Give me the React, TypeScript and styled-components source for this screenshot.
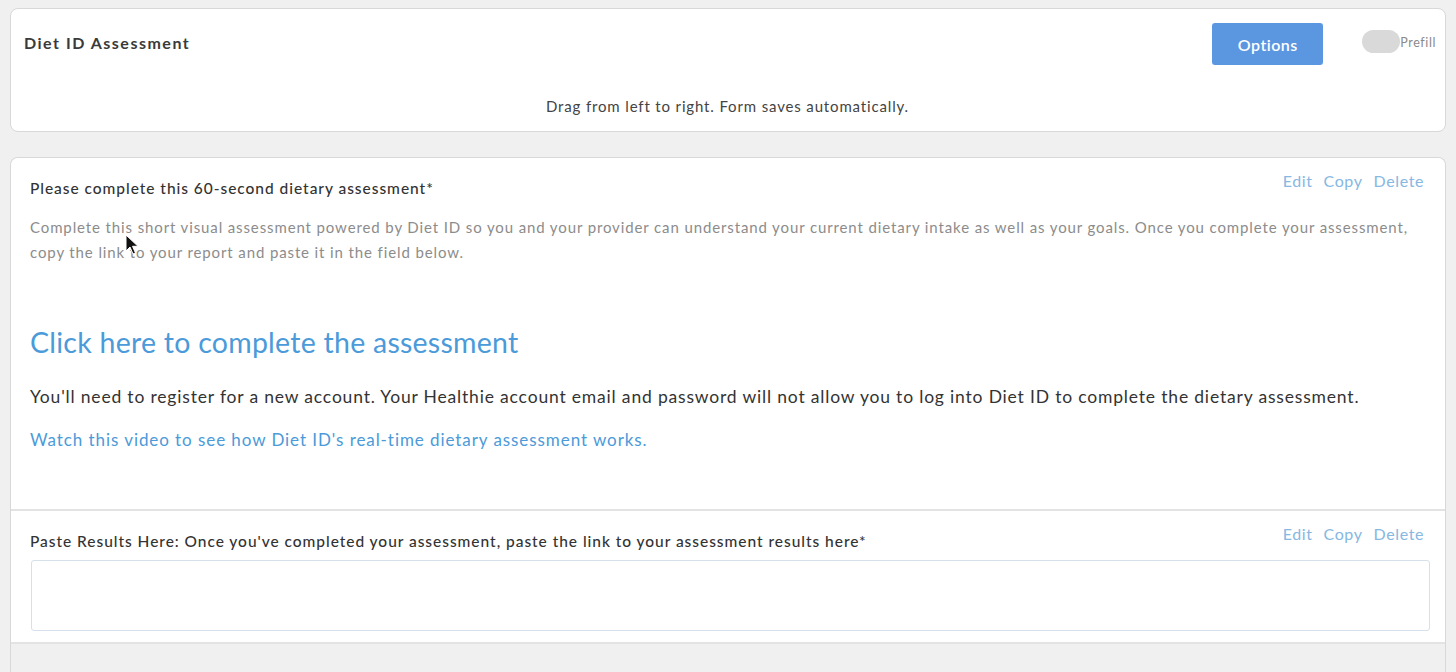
import React from "react";
import styled, { createGlobalStyle } from "styled-components";

const Global = createGlobalStyle`
  html, body { margin: 0; padding: 0; background: #f0f0f0; }
  body { font-family: "Lato", "Open Sans", sans-serif; color: #333; overflow: hidden; }
  * { box-sizing: border-box; }
`;

const Page = styled.div`
  position: relative;
  height: 672px;
  padding: 8px 10px 0 10px;
  display: flex;
  flex-direction: column;
  gap: 25px;
  background: #f0f0f0;
  overflow: hidden;
`;

const HeaderCard = styled.section`
  background: #fff;
  border: 1px solid #d8d8d8;
  border-radius: 8px;
  height: 124px;
  padding: 14px 14px 0 13px;
  display: flex;
  flex-direction: column;
`;

const HeaderTop = styled.div`
  display: flex;
  align-items: center;
  justify-content: space-between;
  height: 42px;
`;

const Title = styled.h1`
  margin: -3px 0 0 0;
  font-size: 16px;
  font-weight: 700;
  color: #3a3a3a;
  letter-spacing: 1.5px;
`;

const HeaderTools = styled.div`
  display: flex;
  align-items: center;
  gap: 39px;
`;

const OptionsButton = styled.button`
  width: 111px;
  height: 42px;
  border: none;
  border-radius: 3px;
  background: #5b97e1;
  color: #fff;
  font-family: "Lato", sans-serif;
  font-size: 16px;
  font-weight: 600;
  letter-spacing: 0.5px;
`;

const PrefillWrap = styled.label`
  display: flex;
  align-items: center;
  margin-top: -6px;
  margin-right: -5px;
`;

const Track = styled.span`
  display: block;
  width: 38px;
  height: 23px;
  border-radius: 11.5px;
  background: #d9d9d9;
`;

const PrefillText = styled.span`
  font-size: 12.5px;
  color: #8a8a8a;
  letter-spacing: 0.6px;
  margin-top: 3px;
`;

const Hint = styled.p`
  margin: 32px 0 0 0;
  text-align: center;
  font-size: 15px;
  color: #444;
  letter-spacing: 0.85px;
`;

const FormCard = styled.section`
  flex: 1;
  background: #f0f0f0;
  border: 1px solid #d8d8d8;
  border-bottom: none;
  border-radius: 8px 8px 0 0;
  overflow: hidden;
  display: flex;
  flex-direction: column;
`;

const FieldBlock = styled.div<{ $h: number }>`
  background: #fff;
  height: ${(p) => p.$h}px;
  border-bottom: 2px solid #e3e3e3;
  padding: 0 15px 0 19px;
  display: flex;
  flex-direction: column;
`;

const FieldHead = styled.div`
  display: flex;
  justify-content: space-between;
  align-items: flex-start;
  padding-top: 15px;
`;

const Label = styled.div`
  font-size: 15.5px;
  color: #333;
  font-weight: 500;
  letter-spacing: 0.96px;
  margin-top: 5.5px;
`;

const Actions = styled.div`
  display: flex;
  gap: 11px;
  margin-top: -2px;
  margin-right: 6px;
`;

const ActionLink = styled.a`
  font-size: 16px;
  color: #86b8e2;
  letter-spacing: 0.6px;
  cursor: pointer;
`;

const Description = styled.p`
  margin: 18px 0 0 0;
  font-size: 15px;
  line-height: 25px;
  color: #8c8c8c;
  letter-spacing: 0.88px;
  white-space: nowrap;
`;

const BigLink = styled.a`
  display: block;
  margin-top: 60px;
  font-size: 28.5px;
  color: #4b9ad9;
  letter-spacing: 0.25px;
  line-height: 34px;
`;

const Body = styled.p`
  margin: 26px 0 0 0;
  font-size: 17.5px;
  color: #333;
  letter-spacing: 0.82px;
  line-height: 24px;
  white-space: nowrap;
`;

const VideoLink = styled.a`
  display: block;
  margin-top: 19px;
  font-size: 17px;
  color: #4b9ad9;
  letter-spacing: 0.93px;
  line-height: 24px;
`;

const InputBox = styled.textarea`
  margin-top: 10px;
  margin-left: 1px;
  height: 71px;
  border: 1px solid #d5e0ea;
  border-radius: 3px;
  resize: none;
  background: #fff;
  outline: none;
`;

const Cursor = styled.svg`
  position: absolute;
  left: 125px;
  top: 234px;
`;

function FieldActions() {
  return (
    <Actions>
      <ActionLink>Edit</ActionLink>
      <ActionLink>Copy</ActionLink>
      <ActionLink>Delete</ActionLink>
    </Actions>
  );
}

export default function App() {
  return (
    <>
      <Global />
      <Page>
        <HeaderCard>
          <HeaderTop>
            <Title>Diet ID Assessment</Title>
            <HeaderTools>
              <OptionsButton>Options</OptionsButton>
              <PrefillWrap>
                <Track />
                <PrefillText>Prefill</PrefillText>
              </PrefillWrap>
            </HeaderTools>
          </HeaderTop>
          <Hint>Drag from left to right. Form saves automatically.</Hint>
        </HeaderCard>

        <FormCard>
          <FieldBlock $h={353}>
            <FieldHead>
              <Label>Please complete this 60-second dietary assessment*</Label>
              <FieldActions />
            </FieldHead>
            <Description>
              Complete this short visual assessment powered by Diet ID so you and your provider can understand your current dietary intake as well as your goals. Once you complete your assessment,
              <br />
              copy the link to your report and paste it in the field below.
            </Description>
            <BigLink>Click here to complete the assessment</BigLink>
            <Body>
              You'll need to register for a new account. Your Healthie account email and password will not allow you to log into Diet ID to complete the dietary assessment.
            </Body>
            <VideoLink>Watch this video to see how Diet ID's real-time dietary assessment works.</VideoLink>
          </FieldBlock>
          <FieldBlock $h={133}>
            <FieldHead>
              <Label>
                Paste Results Here: Once you've completed your assessment, paste the link to your assessment results here*
              </Label>
              <FieldActions />
            </FieldHead>
            <InputBox />
          </FieldBlock>
        </FormCard>
        <Cursor width="14" height="22" viewBox="0 0 14 22">
          <path d="M1 1 L1 17 L5 13 L8 20 L10.5 19 L7.5 12.3 L13 12.3 Z" fill="#111" stroke="#fff" strokeWidth="1" />
        </Cursor>
      </Page>
    </>
  );
}
